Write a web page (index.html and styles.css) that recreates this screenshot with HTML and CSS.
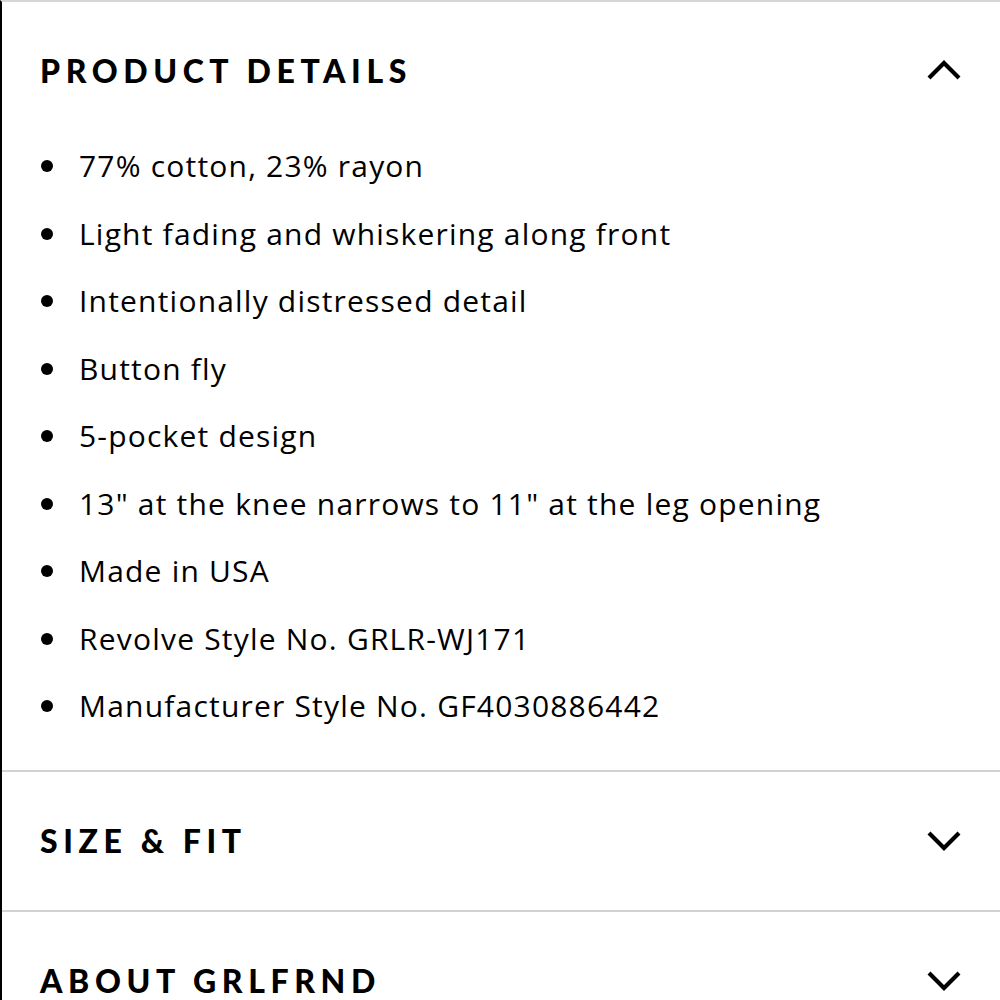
FILE: index.html
```html
<!DOCTYPE html>
<html lang="en">
<head>
    <meta charset="UTF-8">
    <meta name="viewport" content="width=device-width, initial-scale=1.0">
    <title>Product Details</title>
    <link rel="stylesheet" href="styles.css">
</head>
<body>
    <div class="accordion">
        <section class="panel open">
            <div class="panel-header">
                <h2>Product Details</h2>
                <svg class="chevron" width="36" height="22" viewBox="0 0 36 22"><path d="M3 19 L18 4 L33 19" fill="none" stroke="#000" stroke-width="4.2"/></svg>
            </div>
            <ul class="details">
                <li>77% cotton, 23% rayon</li>
                <li>Light fading and whiskering along front</li>
                <li>Intentionally distressed detail</li>
                <li>Button fly</li>
                <li>5-pocket design</li>
                <li>13" at the knee narrows to 11" at the leg opening</li>
                <li>Made in USA</li>
                <li>Revolve Style No. GRLR-WJ171</li>
                <li>Manufacturer Style No. GF4030886442</li>
            </ul>
        </section>

        <section class="panel">
            <div class="panel-header">
                <h2>Size &amp; Fit</h2>
                <svg class="chevron" width="36" height="22" viewBox="0 0 36 22"><path d="M3 3 L18 18 L33 3" fill="none" stroke="#000" stroke-width="4.2"/></svg>
            </div>
        </section>

        <section class="panel">
            <div class="panel-header">
                <h2>About GRLFRND</h2>
                <svg class="chevron" width="36" height="22" viewBox="0 0 36 22"><path d="M3 3 L18 18 L33 3" fill="none" stroke="#000" stroke-width="4.2"/></svg>
            </div>
        </section>
    </div>
</body>
</html>
```

FILE: styles.css
```css
/* General */
body {
    margin: 0;
    background: #fff;
    color: #000;
    font-family: 'Open Sans', sans-serif;
}

.accordion {
    border-top: 2px solid #d6d6d6;
    border-left: 2px solid #000;
    min-height: 998px;
    overflow: hidden;
}

/* Panels */
.panel + .panel {
    border-top: 2px solid #d2d2d2;
}

.panel-header {
    height: 138px;
    display: flex;
    align-items: center;
    justify-content: space-between;
    padding: 0 38px 0 38px;
}

.panel:first-child .panel-header {
    height: 136px;
}

.panel-header h2 {
    margin: 0;
    font-family: 'Lato', sans-serif;
    font-weight: 900;
    font-size: 32px;
    letter-spacing: 0.175em;
    text-transform: uppercase;
}

.chevron {
    display: block;
}

/* Details list */
.details {
    list-style: none;
    margin: -6px 0 0 0;
    padding: 0 38px 30px 38px;
}

.details li {
    position: relative;
    padding-left: 39px;
    height: 67.5px;
    line-height: 67.5px;
    font-size: 30px;
    letter-spacing: 0.04em;
}

.details li::before {
    content: '';
    position: absolute;
    left: 1px;
    top: 28px;
    width: 12px;
    height: 12px;
    border-radius: 50%;
    background: #000;
}
```
